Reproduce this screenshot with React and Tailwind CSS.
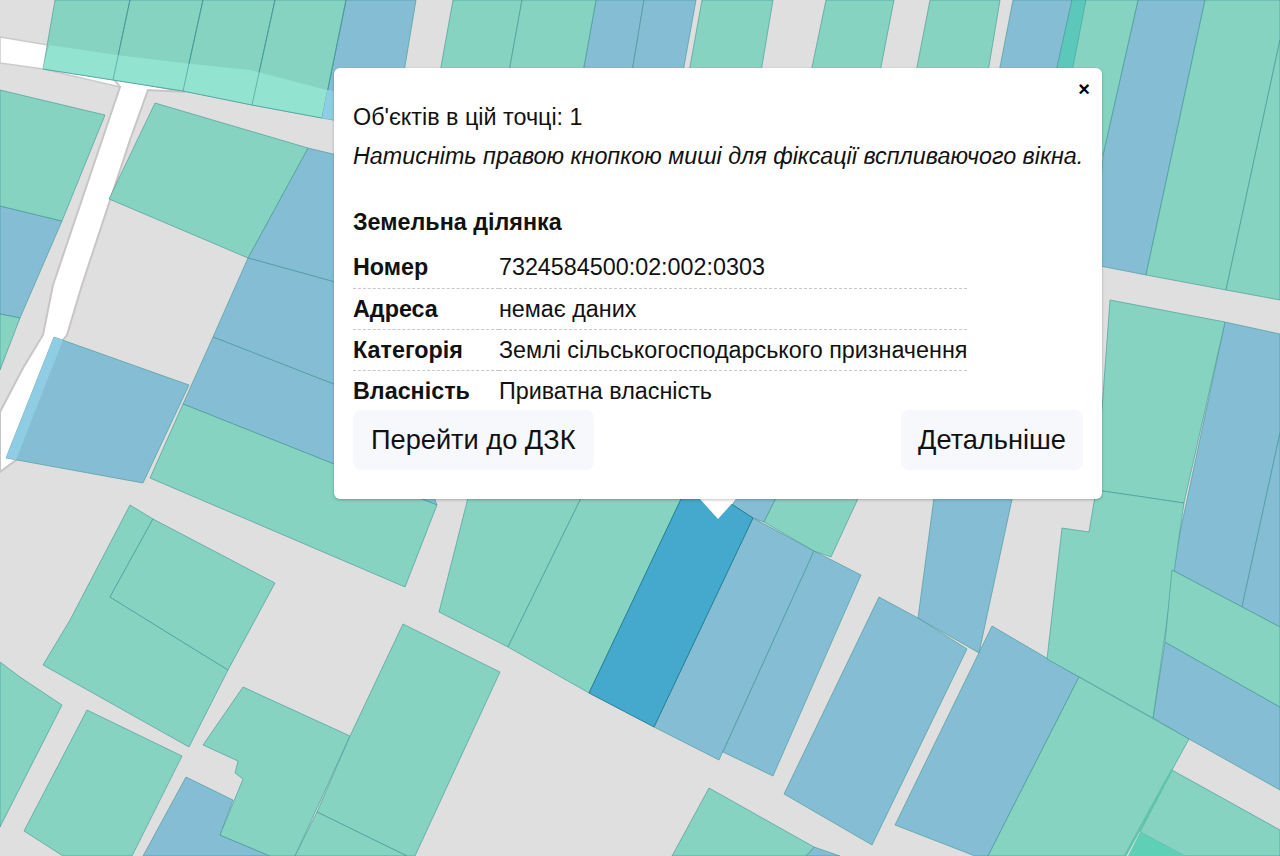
const GREEN = '#85d3c0'
const BLUE = '#85bed4'

const greens = [
  '55,0 130,0 113,80 43,69',
  '130,0 203,0 183,91 113,80',
  '203,0 275,0 252,105 183,91',
  '275,0 346,0 322,118 252,105',
  '453,0 522,0 509,72 440,72',
  '522,0 596,0 583,72 509,72',
  '702,0 773,0 761,72 689,72',
  '826,0 894,0 880,72 811,72',
  '930,0 1000,0 988,72 916,72',
  '1086,0 1138,0 1103,155 1090,160 1060,72',
  '1205,0 1280,0 1280,40 1226,290 1146,275',
  '1280,40 1280,300 1226,290',
  '0,90 105,115 62,221 0,206',
  '0,314 20,318 0,370',
  '155,103 308,148 248,258 109,199',
  '183,404 437,505 405,587 150,478',
  '130,505 153,519 110,597 228,670 189,747 43,665 70,620',
  '153,519 275,583 228,670 110,597',
  '0,662 20,677 62,705 0,827',
  '87,710 182,756 132,856 63,856 24,831',
  '243,687 350,736 295,856 270,856 220,835 243,779 235,773 238,761 203,745',
  '403,624 500,672 415,856 407,856 317,812 350,736',
  '317,812 407,856 295,856',
  '470,490 585,490 508,647 439,612',
  '585,490 686,490 589,693 508,647',
  '780,490 862,490 831,557 814,551 764,522',
  '709,788 814,847 806,856 672,856',
  '1079,677 1189,739 1172,770 1125,856 988,856',
  '1110,300 1225,322 1184,503 1096,490',
  '1096,490 1184,503 1153,718 1047,659 1062,528 1089,532',
  '1172,570 1280,627 1280,707 1165,642',
  '1172,770 1280,830 1280,856 1185,856 1140,832',
]

const blues = [
  '346,0 416,0 404,72 390,130 322,118',
  '596,0 644,0 632,72 583,72',
  '644,0 696,0 683,72 632,72',
  '1013,0 1072,0 1056,72 999,72',
  '1138,0 1205,0 1146,275 1095,265 1103,155',
  '0,206 62,221 20,318 0,314',
  '308,148 400,170 400,300 248,258',
  '248,258 400,300 400,410 213,337',
  '213,337 400,410 437,505 183,404',
  '54,337 189,385 143,483 6,458',
  '186,777 233,800 220,835 270,856 143,856',
  '738,490 780,490 764,522 753,518 733,505',
  '753,518 814,551 719,760 654,727',
  '814,551 861,575 773,776 723,752',
  '879,597 918,618 967,649 872,845 784,794',
  '935,490 1014,490 979,653 918,618',
  '992,626 1079,677 988,856 975,856 895,825',
  '1225,322 1280,334 1280,433 1242,607 1172,570',
  '1280,433 1280,627 1242,607',
  '1165,642 1280,707 1280,790 1189,739 1153,718',
  '814,847 840,856 806,856',
]

function Parcels({ items, fill }) {
  return items.map((points) => (
    <polygon key={points} points={points} fill={fill} stroke="#3f9396" strokeOpacity="0.75" strokeWidth="0.8" />
  ))
}

function MapLayer() {
  return (
    <svg className="block h-full w-full" viewBox="0 0 1280 856">
      <rect width="1280" height="856" fill="#dfdfdf" />
      <polygon points="0,37 48,45 120,60 120,87 43,69 0,63" fill="#fff" stroke="#cbcbcb" strokeWidth="1.5" />
      <polygon points="113,78 120,87 53,285 43,335 23,368 0,412 0,472 16,460 63,340 67,335 82,285 130,140 148,90 185,92" fill="#fff" stroke="#c9c5c5" strokeWidth="2" />
      <Parcels items={blues} fill={BLUE} />
      <Parcels items={greens} fill={GREEN} />
      <polygon points="43,69 49,45 117,55 183,63 250,70 327,90 322,118 252,105 183,91 113,80" fill="#92e3cf" />
      <path d="M113,80 L130,0 M183,91 L203,0 M252,105 L275,0 M322,118 L346,0 M43,69 L113,80 L183,91 L252,105 L322,118" fill="none" stroke="#3f9396" strokeOpacity="0.75" strokeWidth="0.8" />
      <polygon points="327,90 334,91 334,120 322,118" fill="#8fcde4" />
      <polygon points="54,337 63,340 16,460 6,458" fill="#8fcde4" />
      <polygon points="1072,0 1086,0 1072,72 1056,72" fill="#5cc8bb" stroke="#3f9396" strokeOpacity="0.6" strokeWidth="0.8" />
      <polygon points="690,480 733,505 753,518 654,727 589,693" fill="#44a9cc" stroke="#1f7a92" strokeWidth="0.9" />
      <polygon points="1140,832 1185,856 1128,856" fill="#5dd0b5" />
      <path d="M1172,770 L1125,856" fill="none" stroke="#5fc4aa" strokeWidth="2.5" />
    </svg>
  )
}

function Row({ label, value, last }) {
  const line = last ? '' : 'border-b border-dashed border-[#c8c8c8]'
  return (
    <tr className="h-[41px]">
      <th className={`p-0 pr-[29px] text-left align-middle font-bold ${line}`}>{label}</th>
      <td className={`p-0 align-middle ${line}`}>{value}</td>
    </tr>
  )
}

function Popup() {
  return (
    <div className="absolute left-[334px] top-[68px] flex w-[768px] flex-col">
      <div className="relative h-[431px] rounded-md bg-white px-[19px] pt-[36px] font-['Liberation_Sans',Arial,sans-serif] text-[23.33px] leading-[26px] text-[#111] shadow-[0_1px_3px_rgba(0,0,0,0.25)]">
        <button className="absolute right-[12px] top-[10px] text-[20px] font-bold leading-[22px] text-black">×</button>
        <p>Об'єктів в цій точці: 1</p>
        <p className="mt-[13px] whitespace-nowrap italic">Натисніть правою кнопкою миші для фіксації вспливаючого вікна.</p>
        <p className="mt-[40px] font-bold">Земельна ділянка</p>
        <table className="mt-[12px] border-collapse">
          <tbody>
            <Row label="Номер" value="7324584500:02:002:0303" />
            <Row label="Адреса" value="немає даних" />
            <Row label="Категорія" value="Землі сільськогосподарського призначення" />
            <Row label="Власність" value="Приватна власність" last />
          </tbody>
        </table>
        <div className="mt-[-1px] flex justify-between">
          <button className="h-[60px] rounded-lg bg-[#f6f8fb] px-[18px] text-[27.2px] text-[#111]">Перейти до ДЗК</button>
          <button className="h-[60px] rounded-lg bg-[#f6f8fb] px-[17px] text-[27.2px] text-[#111]">Детальніше</button>
        </div>
      </div>
      <div className="mx-auto h-0 w-0 border-x-[18px] border-t-[20px] border-x-transparent border-t-white" />
    </div>
  )
}

export default function App() {
  return (
    <div className="relative h-[856px] w-[1280px] overflow-hidden">
      <MapLayer />
      <Popup />
    </div>
  )
}
